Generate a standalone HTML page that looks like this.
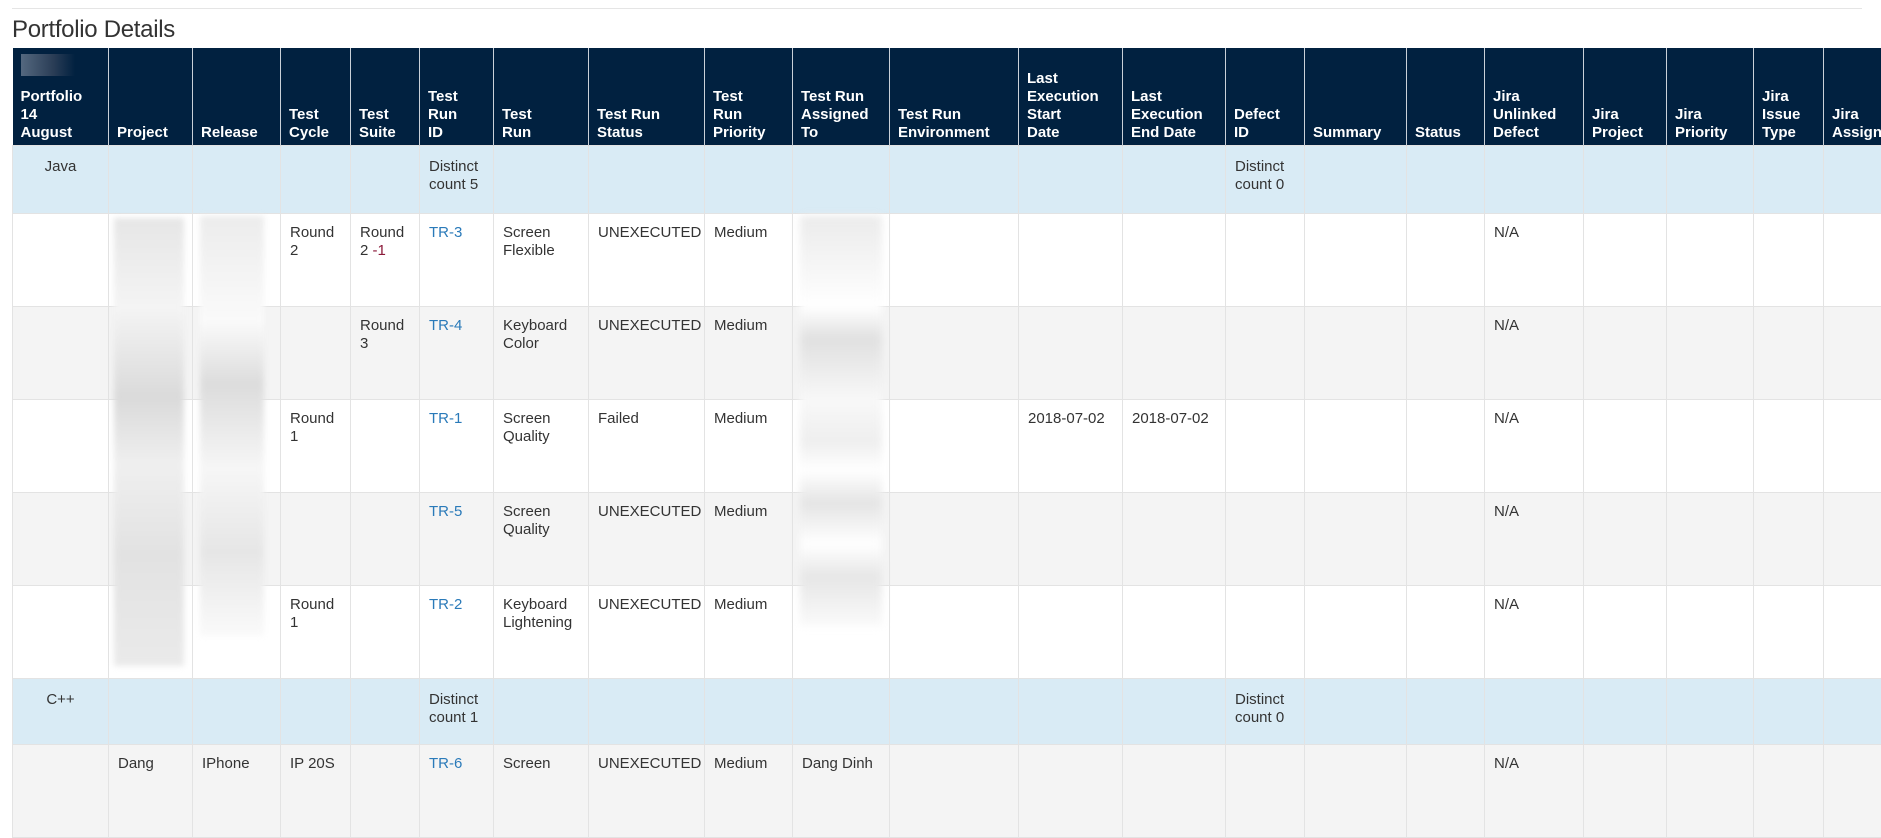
<!DOCTYPE html>
<html><head><meta charset="utf-8">
<style>
html,body{margin:0;padding:0;background:#fff;width:1881px;height:765px;overflow:hidden;font-family:"Liberation Sans",Arial,sans-serif;color:#333}
.topline{position:absolute;left:12px;top:8px;width:1850px;height:1px;background:#e5e5e5}
h1{position:absolute;left:12px;top:16px;margin:0;font-weight:normal;font-size:24px;color:#333;letter-spacing:-0.3px}
table{position:absolute;left:12px;top:48px;border-collapse:collapse;table-layout:fixed;width:1911px}
th{background:#012140;color:#fff;font-weight:bold;font-size:15px;line-height:18px;text-align:left;vertical-align:bottom;padding:0 8px 3px 8px;border-right:1px solid #c9d0d8;height:97px;box-sizing:border-box;overflow:hidden}
td{font-size:15px;line-height:18.5px;vertical-align:top;padding:10px 9px 0 9px;border:1px solid #e3e3e3;box-sizing:border-box;height:93px;color:#333;overflow:hidden}
tr.g td{background:#d9ebf5;height:68px;padding-top:12px}
tr.g2 td{height:66px}
tr.alt td{background:#f4f4f4}
tr.g td:first-child{text-align:center}
a{color:#2a7ab9;text-decoration:none}
.ph{display:block;width:54px;height:22px;position:relative;top:-12px;background:linear-gradient(90deg,#54687f,#2a3d56 60%,#012140)}
.red{color:#8b1a3a}
</style></head><body>
<div class="topline"></div>
<h1>Portfolio Details</h1>
<div style="position:absolute;left:114px;top:218px;width:70px;height:448px;background:linear-gradient(180deg,#e6e6e6,#f4f4f4 20%,#dadada 40%,#efefef 55%,#e2e2e2 75%,#eaeaea);filter:blur(3px);z-index:2"></div>
<div style="position:absolute;left:200px;top:216px;width:64px;height:420px;background:linear-gradient(180deg,#ececec,#fafafa 25%,#dcdcdc 40%,#f6f6f6 60%,#e6e6e6 80%,#fafafa);filter:blur(3px);z-index:2"></div>
<div style="position:absolute;left:800px;top:216px;width:82px;height:410px;background:linear-gradient(180deg,#ebebeb,#f8f8f8 15%,#fff 22%,#e0e0e0 30%,#f8f8f8 45%,#eee 55%,#fff 62%,#e4e4e4 70%,#fff 80%,#e6e6e6 88%,#fafafa);filter:blur(4px);z-index:2"></div>
<table>
<colgroup>
<col style="width:96px"><col style="width:84px"><col style="width:88px"><col style="width:70px"><col style="width:69px"><col style="width:74px"><col style="width:95px"><col style="width:116px"><col style="width:88px"><col style="width:97px"><col style="width:129px"><col style="width:104px"><col style="width:103px"><col style="width:79px"><col style="width:102px"><col style="width:78px"><col style="width:99px"><col style="width:83px"><col style="width:87px"><col style="width:70px"><col style="width:100px">
</colgroup>
<tr><th><span class="ph"></span>Portfolio<br>14<br>August</th><th>Project</th><th>Release</th><th>Test<br>Cycle</th><th>Test<br>Suite</th><th>Test<br>Run<br>ID</th><th>Test<br>Run</th><th>Test Run<br>Status</th><th>Test<br>Run<br>Priority</th><th>Test Run<br>Assigned<br>To</th><th>Test Run<br>Environment</th><th>Last<br>Execution<br>Start<br>Date</th><th>Last<br>Execution<br>End Date</th><th>Defect<br>ID</th><th>Summary</th><th>Status</th><th>Jira<br>Unlinked<br>Defect</th><th>Jira<br>Project</th><th>Jira<br>Priority</th><th>Jira<br>Issue<br>Type</th><th>Jira<br>Assignee</th></tr>
<tr class="g"><td>Java</td><td></td><td></td><td></td><td></td><td>Distinct count 5</td><td></td><td></td><td></td><td></td><td></td><td></td><td></td><td>Distinct count 0</td><td></td><td></td><td></td><td></td><td></td><td></td><td></td></tr>
<tr><td></td><td></td><td></td><td>Round 2</td><td>Round 2 <span class="red">-1</span></td><td><a>TR-3</a></td><td>Screen Flexible</td><td>UNEXECUTED</td><td>Medium</td><td></td><td></td><td></td><td></td><td></td><td></td><td></td><td>N/A</td><td></td><td></td><td></td><td></td></tr>
<tr class="alt"><td></td><td></td><td></td><td></td><td>Round 3</td><td><a>TR-4</a></td><td>Keyboard Color</td><td>UNEXECUTED</td><td>Medium</td><td></td><td></td><td></td><td></td><td></td><td></td><td></td><td>N/A</td><td></td><td></td><td></td><td></td></tr>
<tr><td></td><td></td><td></td><td>Round 1</td><td></td><td><a>TR-1</a></td><td>Screen Quality</td><td>Failed</td><td>Medium</td><td></td><td></td><td>2018-07-02</td><td>2018-07-02</td><td></td><td></td><td></td><td>N/A</td><td></td><td></td><td></td><td></td></tr>
<tr class="alt"><td></td><td></td><td></td><td></td><td></td><td><a>TR-5</a></td><td>Screen Quality</td><td>UNEXECUTED</td><td>Medium</td><td></td><td></td><td></td><td></td><td></td><td></td><td></td><td>N/A</td><td></td><td></td><td></td><td></td></tr>
<tr><td></td><td></td><td></td><td>Round 1</td><td></td><td><a>TR-2</a></td><td>Keyboard Lightening</td><td>UNEXECUTED</td><td>Medium</td><td></td><td></td><td></td><td></td><td></td><td></td><td></td><td>N/A</td><td></td><td></td><td></td><td></td></tr>
<tr class="g g2"><td>C++</td><td></td><td></td><td></td><td></td><td>Distinct count 1</td><td></td><td></td><td></td><td></td><td></td><td></td><td></td><td>Distinct count 0</td><td></td><td></td><td></td><td></td><td></td><td></td><td></td></tr>
<tr class="alt"><td></td><td>Dang</td><td>IPhone</td><td>IP 20S</td><td></td><td><a>TR-6</a></td><td>Screen</td><td>UNEXECUTED</td><td>Medium</td><td>Dang Dinh</td><td></td><td></td><td></td><td></td><td></td><td></td><td>N/A</td><td></td><td></td><td></td><td></td></tr>
</table>
</body></html>
